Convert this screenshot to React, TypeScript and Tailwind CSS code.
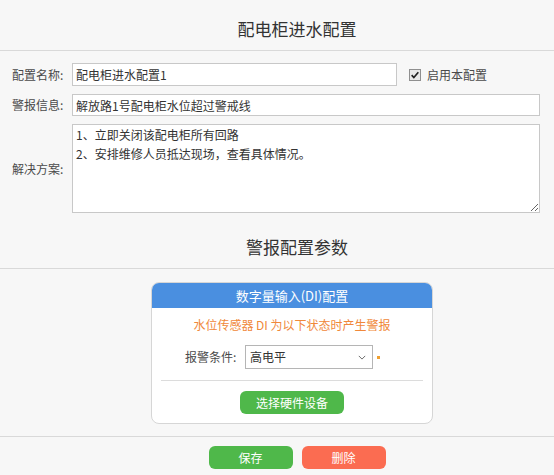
import React from "react"

const font = { fontFamily: '"Noto Sans CJK SC", "Noto Sans", sans-serif' }

function Field({ label, children }: { label: string; children: React.ReactNode }) {
  return (
    <div className="flex items-center">
      <div className="w-[72px] pl-[12px] text-[12px] leading-[16px] text-[#4a4a4a] shrink-0 whitespace-nowrap">{label}</div>
      {children}
    </div>
  )
}

export default function App() {
  return (
    <div className="w-[554px] h-[475px] overflow-hidden bg-[#f7f7f7] text-[#333]" style={font}>
      {/* page title */}
      <div className="h-[51px] border-b border-[#d9d9d9] pl-[40px] pt-[18px] flex justify-center">
        <div className="text-[17px] leading-[22px] text-[#333]">配电柜进水配置</div>
      </div>

      {/* basic form */}
      <div className="pt-[12px] flex flex-col gap-[8px]">
        <Field label="配置名称:">
          <input
            readOnly
            defaultValue="配电柜进水配置1"
            className="w-[325px] h-[23px] bg-white border border-[#c8c8c8] px-[3px] text-[12px] text-[#333] outline-none"
          />
          <label className="flex items-center ml-[12px] gap-[6px]">
            <span className="w-[12px] h-[12px] border border-[#8f8f8f] bg-[#e9e9e9] flex items-center justify-center">
              <svg viewBox="0 0 12 12" className="w-[10px] h-[10px]">
                <path d="M2 6.2 L4.6 9 L10 2.6" fill="none" stroke="#222" strokeWidth="2" />
              </svg>
            </span>
            <span className="text-[12px] leading-[16px] text-[#4a4a4a]">启用本配置</span>
          </label>
        </Field>
        <Field label="警报信息:">
          <input
            readOnly
            defaultValue="解放路1号配电柜水位超过警戒线"
            className="w-[468px] h-[22px] bg-white border border-[#c8c8c8] px-[3px] text-[12px] text-[#333] outline-none"
          />
        </Field>
        <Field label="解决方案:">
          <textarea
            readOnly
            defaultValue={"1、立即关闭该配电柜所有回路\n2、安排维修人员抵达现场，查看具体情况。"}
            className="w-[468px] h-[89px] bg-white border border-[#c8c8c8] px-[3px] py-0 text-[12px] leading-[19px] text-[#333] outline-none"
          />
        </Field>
      </div>

      {/* alarm section heading */}
      <div className="h-[56px] border-b border-[#d9d9d9] pl-[40px] pb-[10px] flex items-end justify-center">
        <div className="text-[17px] leading-[22px] text-[#333]">警报配置参数</div>
      </div>

      {/* DI card */}
      <div className="mt-[13px] ml-[151px] w-[282px] bg-white border border-[#d6d6d6] rounded-[8px] overflow-hidden">
        <div className="h-[25px] bg-[#4a8fe0] text-white text-[13px] leading-[16px] flex items-center justify-center">
          数字量输入(DI)配置
        </div>
        <div className="px-[9px] pt-[9px] pb-[9px] flex flex-col items-center">
          <div className="text-[12px] leading-[16px] text-[#f0883a]">水位传感器 DI 为以下状态时产生警报</div>
          <div className="mt-[12px] flex items-center self-start ml-[24px]">
            <span className="text-[12px] leading-[16px] text-[#4a4a4a] w-[60px] whitespace-nowrap">报警条件:</span>
            <div className="relative w-[128px] h-[24px] border border-[#b5b5b5] bg-white flex items-center pl-[4px] text-[12px] leading-[16px] text-[#333]">
              高电平
              <svg viewBox="0 0 10 6" className="absolute right-[6px] top-[9px] w-[8px] h-[5px]">
                <path d="M1 1 L5 5 L9 1" fill="none" stroke="#666" strokeWidth="1.2" />
              </svg>
            </div>
            <span className="ml-[4px] w-[3px] h-[3px] bg-[#f0a030]" />
          </div>
          <div className="mt-[11px] w-full h-px bg-[#dcdcdc]" />
          <button className="mt-[10px] w-[104px] h-[23px] rounded-[6px] bg-[#4fb84a] text-white text-[12px] leading-[16px]">
            选择硬件设备
          </button>
        </div>
      </div>

      {/* footer */}
      <div className="mt-[12px] border-t border-[#d9d9d9] pt-[9px] flex justify-center gap-[9px] pl-[40px]">
        <button className="w-[84px] h-[23px] rounded-[6px] bg-[#4fb84a] text-white text-[12px] leading-[16px]">保存</button>
        <button className="w-[84px] h-[23px] rounded-[6px] bg-[#fb6c51] text-white text-[12px] leading-[16px]">删除</button>
      </div>
    </div>
  )
}
